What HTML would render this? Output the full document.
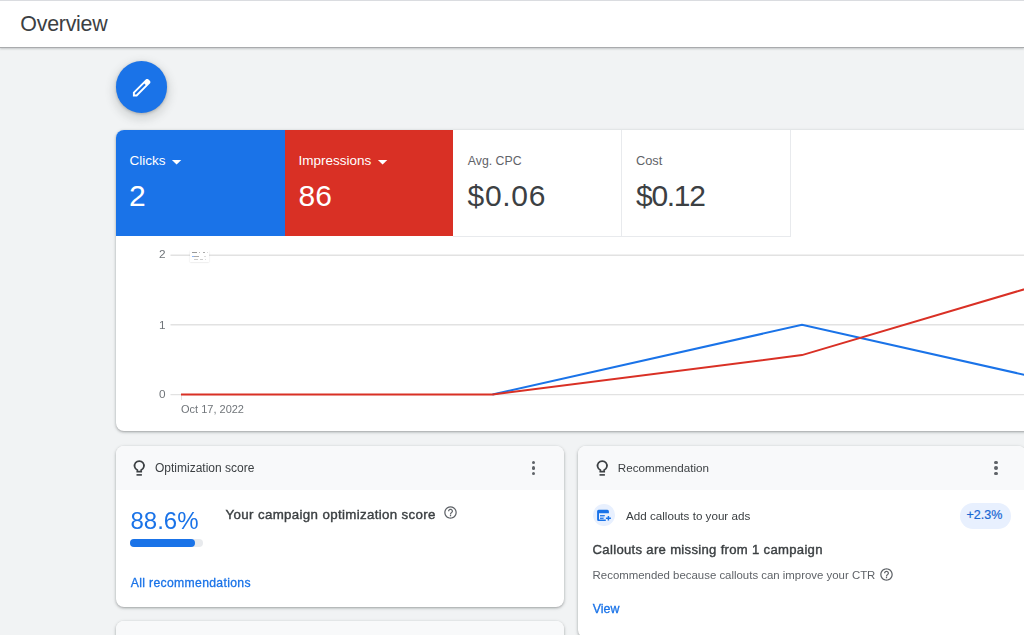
<!DOCTYPE html>
<html><head><meta charset="utf-8">
<style>
*{margin:0;padding:0;box-sizing:border-box}
html,body{width:1024px;height:635px;overflow:hidden;background:#f1f3f4;font-family:"Liberation Sans",sans-serif;position:relative}
.a{position:absolute;white-space:nowrap}
.topline{left:0;top:0;width:1024px;height:1px;background:#dadce0}
.header{left:0;top:1px;width:1024px;height:46px;background:#fff;box-shadow:0 1px 0 #a9abad,0 2px 2px rgba(60,64,67,.25)}
.title{left:20.3px;font-size:21.4px;line-height:21.4px;top:12.6px;color:#3c4043;letter-spacing:-0.25px}
.fab{left:115.5px;top:61px;width:51.5px;height:51.5px;border-radius:50%;background:#1a73e8;box-shadow:0 1px 3px rgba(60,64,67,.3),0 4px 8px 3px rgba(60,64,67,.15)}
.card{background:#fff;border-radius:8px;box-shadow:0 1px 2px rgba(60,64,67,.3),0 1px 3px 1px rgba(60,64,67,.15);overflow:hidden}
.tile{top:0;height:106px}
.lbl{font-size:13.5px;line-height:13.5px;color:#fff}
.val{font-size:30px;line-height:30px;color:#fff}
.grid{height:1px;background:#e0e0e0}
.ylab{font-size:11.8px;line-height:11.8px;color:#70757a;will-change:transform}
.hdr{left:0;top:0;width:448px;height:44px;background:#f8f9fa}
.htxt{font-size:12px;line-height:12px;color:#3c4043}
.dots span{position:absolute;left:0;width:3.9px;height:3.9px;border-radius:50%;background:#5f6368}
</style></head><body>
<div class="a topline"></div>
<div class="a header"><div class="a title">Overview</div></div>

<div class="a fab">
<svg class="a" style="left:14.1px;top:14.9px" width="23.3" height="23.3" viewBox="0 -960 960 960"><path fill="#fff" d="M200-200h57l391-391-57-57-391 391v57Zm-80 80v-170l528-527q12-11 26.5-17t30.5-6q16 0 31 6t26 18l55 56q12 11 17.5 26t5.5 30q0 16-5.5 30.5T817-647L290-120H120Zm640-584-56-56 56 56Zm-141 85-28-29 57 57-29-28Z"/></svg>
</div>

<!-- chart card -->
<div class="a card" style="left:115.5px;top:130px;width:1000px;height:301px;border-top-right-radius:0;border-bottom-right-radius:0">
  <div class="a tile" style="left:0;width:169px;background:#1a73e8"></div>
  <div class="a tile" style="left:169px;width:168.5px;background:#d93025"></div>
  <div class="a tile" style="left:337.5px;width:169px;border-right:1px solid #e8eaed;border-bottom:1px solid #e8eaed;height:107px"></div>
  <div class="a tile" style="left:506.5px;width:169px;border-right:1px solid #e8eaed;border-bottom:1px solid #e8eaed;height:107px"></div>
</div>
<div class="a lbl" style="left:129.5px;top:153.9px">Clicks</div>
<svg class="a" style="left:170px;top:157px" width="14" height="10"><path d="M1.9 2.9H11.3L6.6 7.4Z" fill="#fff"/></svg>
<div class="a val" style="left:129px;top:181.3px">2</div>
<div class="a lbl" style="left:298.5px;top:153.9px">Impressions</div>
<svg class="a" style="left:375.6px;top:157px" width="14" height="10"><path d="M1.9 2.9H11.3L6.6 7.4Z" fill="#fff"/></svg>
<div class="a val" style="left:298.5px;top:181.3px">86</div>
<div class="a lbl" style="left:467.8px;top:155.1px;color:#5f6368;font-size:12.3px">Avg. CPC</div>
<div class="a val" style="left:467.5px;top:181.3px;color:#3c4043;letter-spacing:0.7px">$0.06</div>
<div class="a lbl" style="left:636px;top:154px;color:#5f6368;font-size:12.8px">Cost</div>
<div class="a val" style="left:636px;top:181.3px;color:#3c4043;letter-spacing:-1.3px">$0.12</div>

<!-- chart -->
<svg class="a" style="left:0;top:0" width="1024" height="635"><g stroke="#e2e2e2" stroke-width="1.4"><line x1="170.5" x2="1024" y1="255.2" y2="255.2"/><line x1="170.5" x2="1024" y1="324.8" y2="324.8"/><line x1="170.5" x2="1024" y1="394.6" y2="394.6"/></g></svg>
<div class="a ylab" style="left:159px;top:249.3px">2</div>
<div class="a ylab" style="left:159px;top:319.5px">1</div>
<div class="a ylab" style="left:159px;top:389.1px">0</div>
<div class="a" style="left:181px;top:395px;width:1px;height:5px;background:#e6e6e6"></div>
<div class="a ylab" style="left:181.3px;top:403.5px;font-size:11px;line-height:11px">Oct 17, 2022</div>
<div class="a" style="left:190px;top:250px;width:19px;height:12.3px;background:#fff;box-shadow:0 0.5px 1.5px rgba(60,64,67,.2)">
<div class="a" style="left:1.7px;top:2.2px;width:5.3px;height:1px;background:#999"></div>
<div class="a" style="left:8.7px;top:2.2px;width:1.2px;height:1px;background:#bbb"></div>
<div class="a" style="left:13.4px;top:2.2px;width:1.7px;height:1px;background:#aaa"></div>
<div class="a" style="left:16.6px;top:2.2px;width:1px;height:1px;background:#ddd"></div>
<div class="a" style="left:2px;top:5.8px;width:2px;height:1px;background:#8ab4f8"></div>
<div class="a" style="left:4px;top:5.8px;width:5px;height:1px;background:#aaa"></div>
<div class="a" style="left:14.3px;top:5.8px;width:1.7px;height:1px;background:#ddd"></div>
<div class="a" style="left:4.3px;top:8.8px;width:3.8px;height:1px;background:#ccc"></div>
<div class="a" style="left:9.9px;top:8.8px;width:2.9px;height:1px;background:#ccc"></div>
<div class="a" style="left:14.9px;top:8.8px;width:1px;height:1px;background:#ddd"></div>
</div>
<svg class="a" style="left:0;top:0" width="1024" height="635">
<polyline points="492.5,394.5 802,324.8 1112,394.5" fill="none" stroke="#1a73e8" stroke-width="2"/>
<polyline points="181,394.5 492.5,394.5 802,355.1 1112,263.3" fill="none" stroke="#d93025" stroke-width="2"/>
</svg>

<!-- optimization card -->
<div class="a card" style="left:116px;top:446px;width:448px;height:161px">
  <div class="a hdr"></div>
</div>
<svg class="a" style="left:133px;top:459px" width="13" height="18" viewBox="0 0 13 18"><path d="M4.3 12.7L4.3 11.0A4.7 4.7 0 1 1 8.2 11.0L8.2 12.7Z" fill="none" stroke="#3c4043" stroke-width="1.75"/><rect x="3.5" y="15.1" width="5.4" height="1.6" fill="#3c4043"/></svg>
<div class="a htxt" style="left:155px;top:462px">Optimization score</div>
<div class="a dots" style="left:531.6px;top:460.5px"><span style="top:0"></span><span style="top:5.6px"></span><span style="top:11.1px"></span></div>
<div class="a" style="left:130.5px;top:509px;font-size:24px;line-height:24px;color:#1a73e8">88.6%</div>
<div class="a" style="left:130.2px;top:539.2px;width:73.3px;height:7.8px;border-radius:4px;background:#e8eaed"><div style="width:64.8px;height:7.8px;border-radius:4px;background:#1a73e8"></div></div>
<div class="a" style="left:225.6px;top:507.6px;font-size:13.3px;line-height:13px;color:#3c4043;letter-spacing:0.35px;-webkit-text-stroke:0.4px #3c4043">Your campaign optimization score</div>
<svg class="a" style="left:443px;top:505.3px" width="15" height="15" viewBox="0 0 24 24"><path fill="#5f6368" d="M11 18h2v-2h-2v2zm1-16C6.48 2 2 6.48 2 12s4.48 10 10 10 10-4.48 10-10S17.52 2 12 2zm0 18c-4.41 0-8-3.59-8-8s3.59-8 8-8 8 3.59 8 8-3.59 8-8 8zm0-14c-2.21 0-4 1.79-4 4h2c0-1.1.9-2 2-2s2 .9 2 2c0 2-3 1.75-3 5h2c0-2.25 3-2.5 3-5 0-2.21-1.79-4-4-4z"/></svg>
<div class="a htxt" style="left:130.8px;top:577.2px;color:#1a73e8;font-size:12.2px;letter-spacing:0.33px;-webkit-text-stroke:0.3px #1a73e8">All recommendations</div>

<!-- recommendation card -->
<div class="a card" style="left:578px;top:446px;width:448px;height:192px">
  <div class="a hdr"></div>
</div>
<svg class="a" style="left:595.5px;top:459px" width="13" height="18" viewBox="0 0 13 18"><path d="M4.3 12.7L4.3 11.0A4.7 4.7 0 1 1 8.2 11.0L8.2 12.7Z" fill="none" stroke="#3c4043" stroke-width="1.75"/><rect x="3.5" y="15.1" width="5.4" height="1.6" fill="#3c4043"/></svg>
<div class="a htxt" style="left:617.8px;top:462.2px;font-size:11.65px">Recommendation</div>
<div class="a dots" style="left:994.2px;top:460.5px"><span style="top:0"></span><span style="top:5.6px"></span><span style="top:11.1px"></span></div>
<div class="a" style="left:592.8px;top:504.3px;width:21.8px;height:21.8px;border-radius:50%;background:#e8f0fe"></div>
<svg class="a" style="left:590px;top:502px" width="28" height="28" viewBox="0 0 28 28"><path d="M7.1 11.2V9.3A1.5 1.5 0 0 1 8.6 7.8H17.4A1.5 1.5 0 0 1 18.9 9.3V11.2H9V17.4H15.8V19.1H8.6A1.5 1.5 0 0 1 7.1 17.6Z" fill="#1a73e8"/><rect x="10" y="13.1" width="4.8" height="1.1" fill="#1a73e8"/><rect x="10" y="14.2" width="4.4" height="1.6" fill="#1a73e8" opacity=".3"/><rect x="10" y="15.8" width="3.6" height="1.1" fill="#1a73e8"/><path d="M18.4 14v4.5M15.9 16.2h5" stroke="#1a73e8" stroke-width="1.45"/></svg>
<div class="a htxt" style="left:626px;top:509.6px;font-size:11.65px">Add callouts to your ads</div>
<div class="a" style="left:960px;top:503px;width:51px;height:25.5px;border-radius:13px;background:#e8f0fe"></div>
<div class="a htxt" style="left:966.5px;top:508.9px;color:#1967d2;font-size:12.5px;-webkit-text-stroke:0.2px #1967d2">+2.3%</div>
<div class="a" style="left:592.6px;top:543.3px;font-size:13.1px;line-height:13px;color:#3c4043;letter-spacing:0.31px;-webkit-text-stroke:0.4px #3c4043">Callouts are missing from 1 campaign</div>
<div class="a" style="left:592.6px;top:569.7px;font-size:11.42px;line-height:11.5px;color:#5f6368">Recommended because callouts can improve your CTR</div>
<svg class="a" style="left:879px;top:566.8px" width="15" height="15" viewBox="0 0 24 24"><path fill="#5f6368" d="M11 18h2v-2h-2v2zm1-16C6.48 2 2 6.48 2 12s4.48 10 10 10 10-4.48 10-10S17.52 2 12 2zm0 18c-4.41 0-8-3.59-8-8s3.59-8 8-8 8 3.59 8 8-3.59 8-8 8zm0-14c-2.21 0-4 1.79-4 4h2c0-1.1.9-2 2-2s2 .9 2 2c0 2-3 1.75-3 5h2c0-2.25 3-2.5 3-5 0-2.21-1.79-4-4-4z"/></svg>
<div class="a htxt" style="left:592.8px;top:602.6px;color:#1a73e8;font-size:12.4px;-webkit-text-stroke:0.3px #1a73e8">View</div>

<!-- third card -->
<div class="a card" style="left:116px;top:621px;width:448px;height:60px"><div class="a hdr"></div></div>

</body></html>
